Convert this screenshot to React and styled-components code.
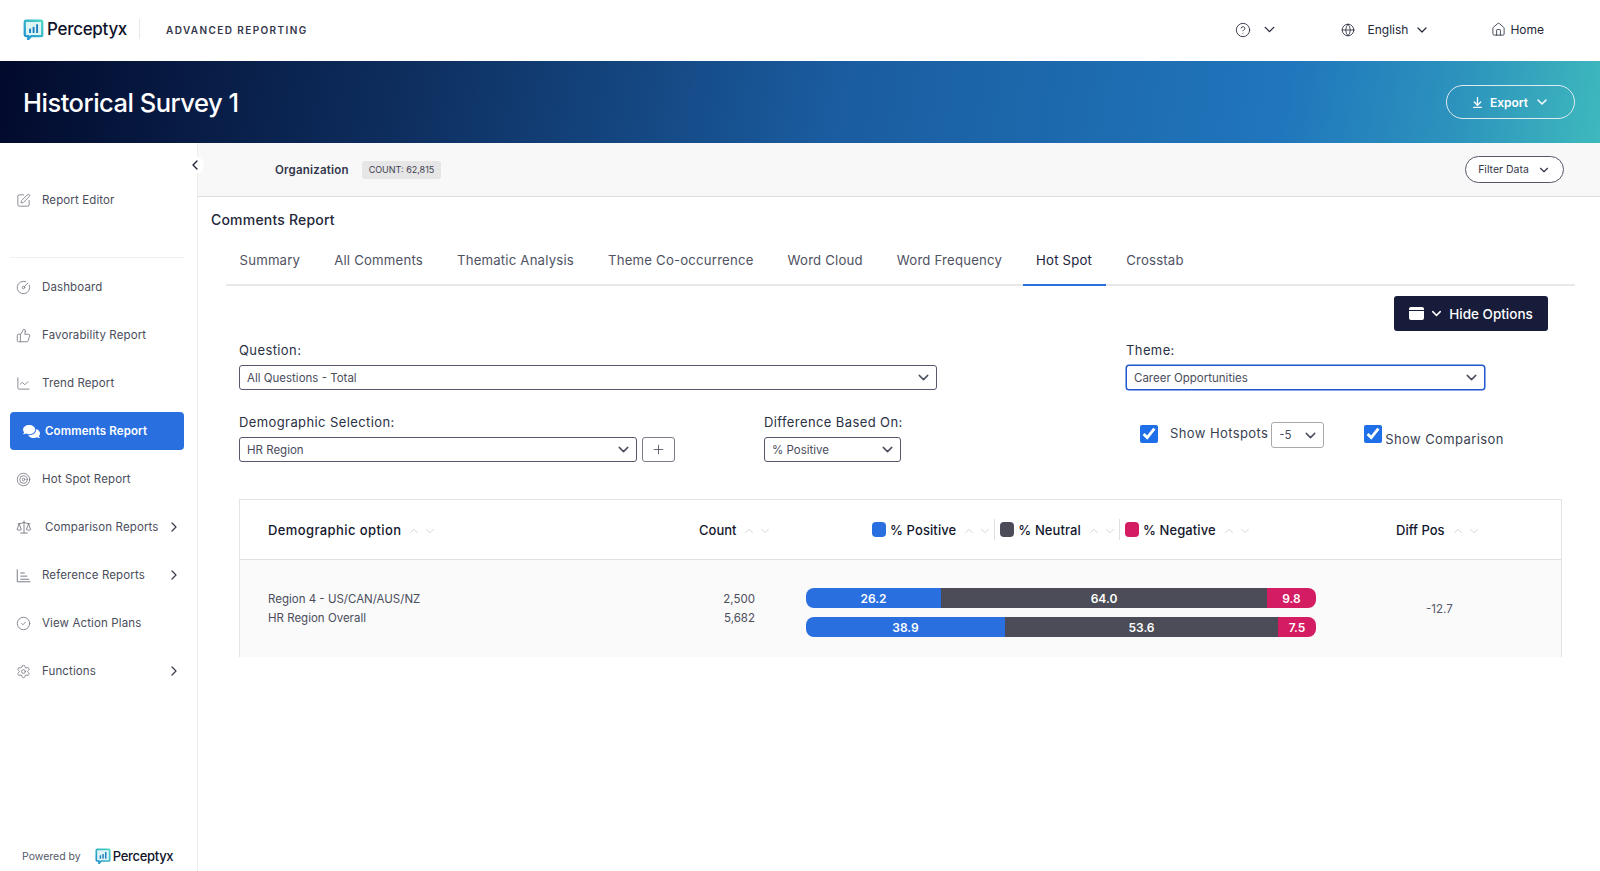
import React from "react";
import styled, { createGlobalStyle } from "styled-components";
import {
  SquarePen, CircleGauge, ThumbsUp, ChartLine, Target, Scale, CircleCheck, Settings,
  CircleHelp, ChevronDown, ChevronUp, ChevronLeft, ChevronRight, Globe, House, ArrowDownToLine, Plus,
} from "lucide-react";
import { FaComments } from "react-icons/fa";

const GlobalStyle = createGlobalStyle`
  html, body { margin: 0; padding: 0; background: #fff; }
  body { font-family: "Inter", "Open Sans", sans-serif; color: #2b2f3f; }
  * { box-sizing: border-box; }
`;

const Page = styled.div`
  width: 1600px;
  height: 871px;
  display: flex;
  flex-direction: column;
  overflow: hidden;
`;

const TopBar = styled.header`
  height: 61px;
  display: flex;
  align-items: center;
  padding-left: 23px;
  background: #fff;
`;

const LogoWrap = styled.div`
  display: flex;
  align-items: center;
  gap: ${(p) => (p.$small ? "2px" : "3px")};
  margin-top: ${(p) => (p.$small ? "0" : "-3px")};
`;

const LogoText = styled.span`
  font-family: "Inter", sans-serif;
  font-weight: 500;
  font-size: ${(p) => (p.$small ? "13px" : "17px")};
  letter-spacing: -0.3px;
  color: #10142b;
`;

const LogoDivider = styled.div`
  width: 1px;
  height: 20px;
  background: #e8e8e8;
  margin: -3px 26px 0 12px;
`;

const ProductName = styled.span`
  font-size: 10px;
  font-weight: 600;
  letter-spacing: 1.4px;
  color: #33364a;
  margin-top: -2px;
`;

const TopNav = styled.nav`
  margin-left: auto;
  display: flex;
  align-items: center;
  padding-right: 56px;
  margin-top: -2px;
  color: #24273a;
  font-size: 12px;
`;

const TopItem = styled.div`
  display: flex;
  align-items: center;
  gap: ${(p) => p.$gap || 6}px;
  margin-left: ${(p) => p.$left || 0}px;
`;

const Hero = styled.div`
  height: 82px;
  flex: none;
  display: flex;
  align-items: center;
  justify-content: space-between;
  padding: 0 25px 0 23px;
  background: linear-gradient(100deg, #020a2c 0%, #0e2f60 26%, #1a5c9f 52%, #2076bc 80%, #2d94bd 91%, #3eb9bd 100%);
`;

const HeroTitle = styled.h1`
  margin: 0;
  font-family: "Inter", sans-serif;
  font-size: 25.5px;
  font-weight: 500;
  letter-spacing: -0.5px;
  color: #fff;
`;

const ExportButton = styled.button`
  width: 129px;
  height: 34px;
  display: flex;
  align-items: center;
  justify-content: center;
  gap: 6px;
  border: 1px solid #dfeaf0;
  border-radius: 17px;
  background: transparent;
  color: #fff;
  font: 600 12px "Inter", sans-serif;
`;

const Body = styled.div`
  flex: 1;
  display: flex;
  min-height: 0;
`;

const Sidebar = styled.aside`
  width: 198px;
  flex: none;
  position: relative;
  display: flex;
  flex-direction: column;
  padding: 38px 13px 0 10px;
  border-right: 1px solid #ededed;
`;

const CollapseDot = styled.div`
  position: absolute;
  top: 13px;
  right: -7px;
  width: 18px;
  height: 18px;
  border-radius: 50%;
  background: #fff;
  display: flex;
  align-items: center;
  justify-content: center;
  color: #20243a;
`;

const NavItem = styled.div`
  height: 38px;
  display: flex;
  align-items: center;
  padding: 0 6px 0 ${(p) => (p.$active ? "13px" : "6px")};
  margin-bottom: ${(p) => p.$after || 10}px;
  border-radius: 4px;
  font-size: 11.5px;
  letter-spacing: 0.12px;
  font-weight: ${(p) => (p.$active ? 600 : 400)};
  background: ${(p) => (p.$active ? "#2a6fe0" : "transparent")};
  color: ${(p) => (p.$active ? "#fff" : "#4a4d5c")};
`;

const NavIcon = styled.span`
  width: ${(p) => p.$width || 26}px;
  flex: none;
  display: flex;
  align-items: center;
  color: ${(p) => (p.$active ? "#fff" : "#7b7d88")};
`;

const NavArrow = styled.span`
  margin-left: auto;
  display: flex;
  color: #3a3d4c;
  margin-right: -4px;
`;

const NavDivider = styled.div`
  height: 1px;
  background: #f0f0f0;
  margin-bottom: 10px;
`;

const PoweredBy = styled.div`
  margin-top: auto;
  height: 40px;
  margin-bottom: -5px;
  padding-left: 12px;
  display: flex;
  align-items: center;
  gap: 14px;
  font-size: 10.5px;
  color: #55586a;
`;

const Main = styled.main`
  flex: 1;
  min-width: 0;
  display: flex;
  flex-direction: column;
`;

const OrgBar = styled.div`
  height: 54px;
  flex: none;
  display: flex;
  align-items: center;
  padding: 0 36px 0 77px;
  background: #f8f8f8;
  border-bottom: 1px solid #dedede;
`;

const OrgName = styled.span`
  font-size: 11.5px;
  font-weight: 600;
  letter-spacing: 0.2px;
  color: #33364a;
`;

const CountTag = styled.span`
  margin-left: 13px;
  height: 18px;
  display: flex;
  align-items: center;
  padding: 0 7px;
  border-radius: 3px;
  background: #e6e6e6;
  font-size: 9px;
  color: #3e4150;
`;

const FilterButton = styled.button`
  margin-left: auto;
  width: 99px;
  height: 27px;
  display: flex;
  align-items: center;
  justify-content: center;
  gap: 8px;
  border: 1px solid #55586a;
  border-radius: 14px;
  background: #fff;
  color: #33364a;
  font: 400 10.5px "Inter", sans-serif;
`;

const Content = styled.div`
  padding: 11px 25px 0 13px;
`;

const ReportTitle = styled.h2`
  margin: 0;
  height: 24px;
  font-size: 14px;
  line-height: 24px;
  font-weight: 500;
  letter-spacing: 0.2px;
  color: #24273a;
`;

const Tabs = styled.div`
  margin: 15px 0 0 15px;
  height: 39px;
  display: flex;
  gap: 7px;
  border-bottom: 2px solid #e8e8e8;
`;

const Tab = styled.div`
  height: 39px;
  padding: 0 13.5px 11px;
  display: flex;
  align-items: center;
  font-size: 13.2px;
  letter-spacing: 0.19px;
  color: ${(p) => (p.$active ? "#20243a" : "#4f5263")};
  border-bottom: 2px solid ${(p) => (p.$active ? "#2a6fe0" : "transparent")};
`;

const OptionsRow = styled.div`
  display: flex;
  justify-content: flex-end;
  margin-top: 10px;
  padding-right: 27px;
`;

const HideButton = styled.button`
  width: 154px;
  height: 35px;
  display: flex;
  align-items: center;
  justify-content: center;
  gap: 5px;
  border: 0;
  border-radius: 3px;
  background: #171c3a;
  color: #fff;
  font: 500 13.5px "Inter", sans-serif;
`;

const PanelIcon = styled.span`
  width: 15px;
  height: 13px;
  border-radius: 2px;
  background: #fff;
  border-top: 3px solid #fff;
  box-shadow: inset 0 1px 0 #171c3a;
`;

const FormRow = styled.div`
  display: grid;
  grid-template-columns: ${(p) => p.$columns};
  margin-top: ${(p) => p.$top}px;
  padding-left: 28px;
`;

const Field = styled.div`
  display: flex;
  flex-direction: column;
`;

const FieldLabel = styled.label`
  height: 20px;
  font-size: 13px;
  line-height: 20px;
  letter-spacing: 0.4px;
  color: #2a3145;
  margin-bottom: 5px;
`;

const SelectBox = styled.div`
  width: ${(p) => p.$width}px;
  height: ${(p) => p.$height || 25}px;
  display: flex;
  align-items: center;
  justify-content: space-between;
  padding: 0 4px 0 7px;
  border: 1px solid ${(p) => (p.$focus ? "#1f55cf" : p.$soft ? "#a9a9a9" : "#55586a")};
  box-shadow: ${(p) => (p.$focus ? "0 0 0 0.5px #1f55cf" : "none")};
  border-radius: 3px;
  background: #fff;
  font-size: 11.5px;
  color: #4a4d5c;
`;

const FieldLine = styled.div`
  display: flex;
  gap: 5px;
`;

const PlusButton = styled.div`
  width: 33px;
  height: 25px;
  display: flex;
  align-items: center;
  justify-content: center;
  border: 1px solid #7b7d88;
  border-radius: 3px;
  color: #4a4d5c;
`;

const Toggles = styled.div`
  display: flex;
  align-items: flex-start;
  padding-top: 10px;
  padding-left: 1px;
`;

const CheckBox = styled.input`
  width: 18px;
  height: 18px;
  margin: ${(p) => p.$margin};
  accent-color: #1e6fe8;
  flex: none;
`;

const ToggleText = styled.span`
  font-size: 13px;
  line-height: 18px;
  letter-spacing: 0.4px;
  color: #3a3f52;
  margin: ${(p) => p.$margin};
  white-space: nowrap;
`;

const Table = styled.div`
  margin: 37px 0 0 28px;
  width: 1323px;
  border: 1px solid #e3e3e3;
  border-bottom: 0;
`;

const HeadRow = styled.div`
  display: grid;
  grid-template-columns: 459px 107px 510px 1fr;
  height: 60px;
  align-items: center;
  border-bottom: 1px solid #e0e0e0;
`;

const DataRow = styled.div`
  display: grid;
  grid-template-columns: 459px 107px 510px 1fr;
  height: 97px;
  align-items: center;
  background: #fafafa;
`;

const HeadCell = styled.div`
  display: flex;
  align-items: center;
  padding-left: ${(p) => p.$left || 0}px;
  font-size: 13px;
  font-weight: 500;
  letter-spacing: ${(p) => p.$spacing || 0}px;
  color: #14182e;
`;

const Sort = styled.span`
  display: inline-flex;
  align-items: center;
  gap: 2px;
  margin-left: 6px;
  margin-top: 3px;
  color: #cfd0d4;
`;

const Legend = styled.div`
  display: flex;
  align-items: center;
  white-space: nowrap;
  font-size: 13px;
  font-weight: 500;
  letter-spacing: 0.1px;
  color: #14182e;
`;

const LegendSwatch = styled.span`
  width: 14px;
  height: 15px;
  border-radius: 4px;
  margin-right: 4px;
  background: ${(p) => p.$color};
`;

const LegendSep = styled.span`
  width: 1px;
  height: 21px;
  background: #e0e0e0;
  margin: 0 5px 0 2px;
`;

const Lines = styled.div`
  display: flex;
  flex-direction: column;
  gap: ${(p) => p.$gap}px;
  padding-left: ${(p) => p.$left || 0}px;
  padding-right: ${(p) => p.$right || 0}px;
  text-align: ${(p) => p.$align || "left"};
  font-size: 11.5px;
  line-height: 14px;
  color: #4a4d5c;
`;

const Bars = styled.div`
  display: flex;
  flex-direction: column;
  gap: 9px;
  margin-top: 8px;
`;

const Bar = styled.div`
  display: flex;
  height: 20px;
  border-radius: 8px;
  overflow: hidden;
`;

const BarPart = styled.div`
  display: flex;
  align-items: center;
  justify-content: center;
  background: ${(p) => p.$color};
  color: #fff;
  font-size: 12px;
  font-weight: 600;
`;

const DiffValue = styled.div`
  padding-left: 110px;
  font-size: 11.5px;
  color: #55586a;
`;

const LogoMark = ({ size }) => (
  <svg width={size} height={size} viewBox="0 0 24 24" fill="none">
    <defs>
      <linearGradient id="logoGrad" x1="0" y1="1" x2="1" y2="0">
        <stop offset="0" stopColor="#1f8fd0" />
        <stop offset="1" stopColor="#4ad6c4" />
      </linearGradient>
    </defs>
    <path d="M2 3.5A1.5 1.5 0 0 1 3.5 2H20.5A1.5 1.5 0 0 1 22 3.5V18.5A1 1 0 0 1 21 19.5H9.5L6 23V19.5H3.5A1.5 1.5 0 0 1 2 18V3.5Z" stroke="url(#logoGrad)" strokeWidth="2.6" fill="#dff5f5" />
    <rect x="7" y="11" width="2.2" height="5" fill="#1e7fc0" />
    <rect x="11" y="9" width="2.2" height="7" fill="#1e7fc0" />
    <rect x="15" y="6" width="2.2" height="10" fill="#1e7fc0" />
  </svg>
);

const RefIcon = () => (
  <svg width="15" height="15" viewBox="0 0 24 24" fill="none" stroke="currentColor" strokeWidth="1.6">
    <path d="M2 2V22H23" />
    <path d="M7 8H14M7 13H18M7 18H21" />
  </svg>
);

const SortArrows = () => (
  <Sort>
    <ChevronUp size={14} strokeWidth={1.5} />
    <ChevronDown size={14} strokeWidth={1.5} />
  </Sort>
);

const navTop = [
  { label: "Dashboard", icon: <CircleGauge size={15} strokeWidth={1.4} /> },
  { label: "Favorability Report", icon: <ThumbsUp size={15} strokeWidth={1.4} /> },
  { label: "Trend Report", icon: <ChartLine size={15} strokeWidth={1.4} /> },
  { label: "Comments Report", icon: <FaComments size={17} />, active: true },
  { label: "Hot Spot Report", icon: <Target size={15} strokeWidth={1.4} /> },
  { label: "Comparison Reports", icon: <Scale size={16} strokeWidth={1.4} />, arrow: true, wide: true },
  { label: "Reference Reports", icon: <RefIcon />, arrow: true },
  { label: "View Action Plans", icon: <CircleCheck size={15} strokeWidth={1.4} /> },
  { label: "Functions", icon: <Settings size={15} strokeWidth={1.4} />, arrow: true },
];

const tabs = ["Summary", "All Comments", "Thematic Analysis", "Theme Co-occurrence", "Word Cloud", "Word Frequency", "Hot Spot", "Crosstab"];

const bars = [
  [{ v: "26.2", w: 135, c: "#2a6fe0" }, { v: "64.0", w: 326, c: "#4b4c57" }, { v: "9.8", w: 49, c: "#d41c62" }],
  [{ v: "38.9", w: 199, c: "#2a6fe0" }, { v: "53.6", w: 273, c: "#4b4c57" }, { v: "7.5", w: 38, c: "#d41c62" }],
];

export default function App() {
  return (
    <Page>
      <GlobalStyle />
      <TopBar>
        <LogoWrap>
          <LogoMark size={21} />
          <LogoText>Perceptyx</LogoText>
        </LogoWrap>
        <LogoDivider />
        <ProductName>ADVANCED REPORTING</ProductName>
        <TopNav>
          <TopItem $gap={10}>
            <CircleHelp size={16} strokeWidth={1.3} />
            <ChevronDown size={17} strokeWidth={1.8} />
          </TopItem>
          <TopItem $left={63} $gap={12}>
            <Globe size={14} strokeWidth={1.4} />
            <span>English</span>
            <ChevronDown size={16} strokeWidth={1.8} style={{ marginLeft: -6 }} />
          </TopItem>
          <TopItem $left={61} $gap={4}>
            <House size={15} strokeWidth={1.3} />
            <span>Home</span>
          </TopItem>
        </TopNav>
      </TopBar>

      <Hero>
        <HeroTitle>Historical Survey 1</HeroTitle>
        <ExportButton>
          <ArrowDownToLine size={13} strokeWidth={2.4} />
          Export
          <ChevronDown size={16} strokeWidth={2.2} />
        </ExportButton>
      </Hero>

      <Body>
        <Sidebar>
          <CollapseDot><ChevronLeft size={16} strokeWidth={2} /></CollapseDot>
          <NavItem $after={38}>
            <NavIcon $width={26}><SquarePen size={15} strokeWidth={1.4} /></NavIcon>
            Report Editor
          </NavItem>
          <NavDivider />
          {navTop.map((item) => (
            <NavItem key={item.label} $active={item.active}>
              <NavIcon $active={item.active} $width={item.active ? 22 : item.wide ? 29 : 26}>{item.icon}</NavIcon>
              {item.label}
              {item.arrow && <NavArrow><ChevronRight size={16} strokeWidth={1.8} /></NavArrow>}
            </NavItem>
          ))}
          <PoweredBy>
            Powered by
            <LogoWrap $small>
              <LogoMark size={16} />
              <LogoText $small>Perceptyx</LogoText>
            </LogoWrap>
          </PoweredBy>
        </Sidebar>

        <Main>
          <OrgBar>
            <OrgName>Organization</OrgName>
            <CountTag>COUNT: 62,815</CountTag>
            <FilterButton>Filter Data <ChevronDown size={14} strokeWidth={2} /></FilterButton>
          </OrgBar>
          <Content>
            <ReportTitle>Comments Report</ReportTitle>
            <Tabs>
              {tabs.map((t) => (
                <Tab key={t} $active={t === "Hot Spot"}>{t}</Tab>
              ))}
            </Tabs>
            <OptionsRow>
              <HideButton>
                <PanelIcon />
                <ChevronDown size={15} strokeWidth={2.4} />
                Hide Options
              </HideButton>
            </OptionsRow>

            <FormRow $columns="887px 1fr" $top={9}>
              <Field>
                <FieldLabel>Question:</FieldLabel>
                <SelectBox $width={698}>All Questions - Total <ChevronDown size={17} strokeWidth={2} /></SelectBox>
              </Field>
              <Field>
                <FieldLabel>Theme:</FieldLabel>
                <SelectBox $width={359} $focus>Career Opportunities <ChevronDown size={17} strokeWidth={2} /></SelectBox>
              </Field>
            </FormRow>

            <FormRow $columns="525px 375px 1fr" $top={22}>
              <Field>
                <FieldLabel>Demographic Selection:</FieldLabel>
                <FieldLine>
                  <SelectBox $width={398}>HR Region <ChevronDown size={17} strokeWidth={2} /></SelectBox>
                  <PlusButton><Plus size={15} strokeWidth={1.3} /></PlusButton>
                </FieldLine>
              </Field>
              <Field>
                <FieldLabel>Difference Based On:</FieldLabel>
                <SelectBox $width={137}>% Positive <ChevronDown size={17} strokeWidth={2} /></SelectBox>
              </Field>
              <Toggles>
                <CheckBox type="checkbox" defaultChecked readOnly $margin="3px 12px 0 0" />
                <ToggleText $margin="2px 3px 0 0">Show Hotspots</ToggleText>
                <SelectBox $width={53} $height={26} $soft>-5 <ChevronDown size={17} strokeWidth={2} /></SelectBox>
                <CheckBox type="checkbox" defaultChecked readOnly $margin="3px 3px 0 40px" />
                <ToggleText $margin="8px 0 0 0">Show Comparison</ToggleText>
              </Toggles>
            </FormRow>

            <Table>
              <HeadRow>
                <HeadCell $left={28} $spacing={0.4}>Demographic option <SortArrows /></HeadCell>
                <HeadCell>Count <SortArrows /></HeadCell>
                <HeadCell $left={66}>
                  <Legend>
                    <LegendSwatch $color="#2a6fe0" />% Positive <SortArrows /><LegendSep />
                    <LegendSwatch $color="#4b4c57" />% Neutral <SortArrows /><LegendSep />
                    <LegendSwatch $color="#d41c62" />% Negative <SortArrows />
                  </Legend>
                </HeadCell>
                <HeadCell $left={80}>Diff Pos <SortArrows /></HeadCell>
              </HeadRow>
              <DataRow>
                <Lines $gap={5} $left={28}>
                  <span>Region 4 - US/CAN/AUS/NZ</span>
                  <span>HR Region Overall</span>
                </Lines>
                <Lines $gap={5} $align="right" $right={51} style={{ marginLeft: -35 }}>
                  <span>2,500</span>
                  <span>5,682</span>
                </Lines>
                <Bars>
                  {bars.map((b, i) => (
                    <Bar key={i}>
                      {b.map((p) => (
                        <BarPart key={p.v} $color={p.c} style={{ width: p.w }}>{p.v}</BarPart>
                      ))}
                    </Bar>
                  ))}
                </Bars>
                <DiffValue>-12.7</DiffValue>
              </DataRow>
            </Table>
          </Content>
        </Main>
      </Body>
    </Page>
  );
}
